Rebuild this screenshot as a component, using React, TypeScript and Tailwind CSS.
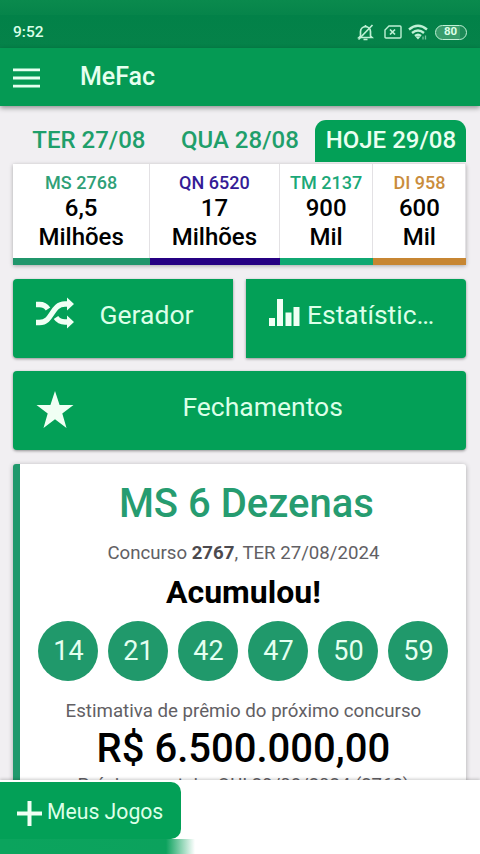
const days = [
  { label: "TER 27/08", className: "w-[151px] text-[#1f9f6b]" },
  { label: "QUA 28/08", className: "w-[151px] text-[#1f9f6b]" },
  { label: "HOJE 29/08", className: "w-[151px] rounded-t-[11px] bg-[#03a057] text-[#e9fff1]" },
]

const draws = [
  { name: "MS 2768", value: "6,5", unit: "Milhões", className: "w-[136.500px]", bar: "bg-[#20966b]", color: "text-[#2fa077]" },
  { name: "QN 6520", value: "17", unit: "Milhões", className: "w-[130px]", bar: "bg-[#250082]", color: "text-[#341c96]" },
  { name: "TM 2137", value: "900", unit: "Mil", className: "w-[93.500px]", bar: "bg-[#10a872]", color: "text-[#1ba878]" },
  { name: "DI 958", value: "600", unit: "Mil", className: "w-[93px]", bar: "bg-[#c78632]", color: "text-[#c98c3c]" },
]

const numbers = [14, 21, 42, 47, 50, 59]

function ShuffleIcon() {
  return (
    <svg viewBox="0 0 38 32" className="mt-px ml-[0.600px] h-8 w-[38px]" fill="none" stroke="#f0fff4" strokeWidth="5.400">
      <path d="M0 7.500h3.500c4 0 6.500 1.500 8.500 4.500" />
      <path d="M0 25.500h3.500C17 25.500 15 7 29 7h3.500" />
      <path d="M20 20.500c2 3 5 4.500 9 4.500h3.500" />
      <path d="M31 .5v13l7-6.500zM31 18.500v13l7-6.500z" fill="#f0fff4" stroke="none" />
    </svg>
  )
}

function BellOffIcon() {
  return (
    <svg viewBox="0 0 17 17" className="mr-[10px] h-[17px] w-[17px]" fill="none" stroke="currentColor" strokeWidth="1.700">
      <path d="M2 13.500 3.500 12V7.500a5 5 0 0 1 5-4.800 5 5 0 0 1 5 4.800V12l1.500 1.500zM8.500 1v2M6.500 15.500h4" />
      <path d="M15.500 1 1.500 15.500" />
    </svg>
  )
}

function WifiIcon() {
  return (
    <svg viewBox="0 0 20 16" className="mr-[7px] h-4 w-5" fill="none" stroke="currentColor" strokeWidth="2.300">
      <path d="M1 5.500q9-7.500 18 0M4 9q6-5 12 0" />
      <path d="M7 12q3-2.500 6 0" />
      <path d="m7.800 13 2.200 2.500 2.200-2.500q-2.200-1.500-4.400 0z" fill="currentColor" stroke="none" />
      <path d="M15 12.500v3M17.500 11.500v4" strokeWidth="1.300" opacity=".6" />
    </svg>
  )
}

function StatusBar() {
  return (
    <div className="flex h-12 shrink-0 items-start justify-between bg-[linear-gradient(180deg,#0a8a4d_0,#06844a_15px,#028148_15px,#058249_100%)] px-[13px] pt-[21px] text-[#d9ffe8]">
      <span className="text-[15.500px] font-medium leading-[23px]">9:52</span>
      <div className="flex h-[22px] items-center text-[#bff0d5]">
        <BellOffIcon />
        <svg viewBox="0 0 18 14" className="mr-[6px] h-[14px] w-[18px]" fill="none" stroke="currentColor" strokeWidth="1.400">
          <path d="M5 1h11q1 0 1 1v10q0 1-1 1H2q-1 0-1-1V5z" />
          <path d="m6 4.500 5 5m0-5-5 5" strokeWidth="1.700" />
        </svg>
        <WifiIcon />
        <span className="flex h-[15px] w-8 items-center justify-center rounded-full border-[1.500px] border-[#bff0d5] bg-[linear-gradient(90deg,#3a9d6c_80%,#1c8a57_80%)] pr-px text-[11.500px] font-bold leading-none text-[#dcffe8]">80</span>
      </div>
    </div>
  )
}

export default function App() {
  return (
    <div className="flex h-[854px] w-[480px] flex-col overflow-hidden bg-[#f1eff2] font-[Roboto,sans-serif]">
      <StatusBar />
      <header className="z-10 flex h-[58px] shrink-0 items-center bg-[#059a54] pl-[13px] text-[#e6ffef] shadow-[0_2px_5px_rgba(0,0,0,0.4)]">
        <svg viewBox="0 0 27 20" className="mt-px h-5 w-[27px]" stroke="currentColor" strokeWidth="2.800">
          <path d="M0 1.800h27M0 10h27M0 18.200h27" />
        </svg>
        <h1 className="ml-10 text-[25px] font-medium leading-8">MeFac</h1>
      </header>

      <main className="min-h-0 flex-1 overflow-hidden pl-[13.400px] pr-[13.600px] pt-[14px]">
        <div className="flex h-[42px] text-center text-[24px] font-medium leading-[41px]">
          {days.map((day) => (
            <div key={day.label} className={day.className}>{day.label}</div>
          ))}
        </div>

        <section className="mt-[2px] flex h-[101px] bg-white shadow-[0_1px_4px_rgba(0,0,0,0.3)]">
          {draws.map((draw) => (
            <div key={draw.name} className={`flex flex-col text-center font-medium ${draw.className}`}>
              <div className="flex-1 border-r border-[#e3e1e4] pt-[8px]">
                <p className={`text-[18px] leading-[22px] ${draw.color}`}>{draw.name}</p>
                <p className="text-[24px] leading-[28.500px] text-black">{draw.value}</p>
                <p className="text-[24px] leading-[28.500px] text-black">{draw.unit}</p>
              </div>
              <div className={`h-[7px] ${draw.bar}`} />
            </div>
          ))}
        </section>

        <div className="mt-[14px] flex gap-[13px] text-[26.500px] text-[#dcffe8]">
          <button className="flex h-[79px] w-[220px] rounded-l-[4px] bg-[#03a057] pl-[22px] pt-[17px] shadow-[0_1px_3px_rgba(0,0,0,0.4)]">
            <ShuffleIcon />
            <span className="ml-[25.500px] leading-[38px]">Gerador</span>
          </button>
          <button className="flex h-[79px] w-[220px] rounded-r-[4px] bg-[#03a057] pl-[22.500px] pt-[17px] shadow-[0_1px_3px_rgba(0,0,0,0.4)]">
            <svg viewBox="0 0 31 28" className="mt-[3px] h-7 w-[31px]" fill="#f0fff4">
              <path d="M0 19h6v8H0zM8 0h6v27H8zM16.500 13.500h6V27h-6zM24.500 8h6v19h-6z" />
            </svg>
            <span className="ml-[7px] leading-[38px]">Estatístic…</span>
          </button>
        </div>

        <button className="mt-[13px] flex h-[79px] w-full rounded-[4px] bg-[#03a057] pl-[22.500px] pt-[17px] text-[26.500px] text-[#dcffe8] shadow-[0_1px_3px_rgba(0,0,0,0.4)]">
          <svg viewBox="0 0 38 38" className="mt-[3px] h-[38px] w-[38px]" fill="#f0fff4">
            <path d="m19 0 4.600 14H37.500L26.300 22.500 30.500 37 19 28.200 7.500 37l4.200-14.500L.5 14h13.900z" />
          </svg>
          <span className="flex-1 pr-[15px] text-center leading-[38px]">Fechamentos</span>
        </button>

        <section className="mt-[14px] h-[420px] rounded-[3px] border-l-[7px] border-[#20996c] bg-white pt-[15px] text-center shadow-[0_1px_5px_rgba(0,0,0,0.3)]">
          <h2 className="pl-[6px] text-[40px] font-medium leading-[50px] text-[#269c70]">MS 6 Dezenas</h2>
          <p className="mt-[12px] text-[18.650px] leading-6 text-[#626064]">
            Concurso <b className="text-[#4c4a4e]">2767</b>, TER 27/08/2024
          </p>
          <p className="mt-2 text-[32px] font-bold leading-[38px] text-black">Acumulou!</p>
          <div className="mt-[10px] flex justify-center gap-[10px]">
            {numbers.map((number) => (
              <span key={number} className="flex h-[60px] w-[60px] items-center justify-center rounded-full bg-[#20996b] text-[27px] text-[#e4fff0]">{number}</span>
            ))}
          </div>
          <p className="mt-[18px] text-[18.700px] leading-6 text-[#626064]">Estimativa de prêmio do próximo concurso</p>
          <p className="mt-[3px] text-[40px] font-medium leading-[46px] text-black">R$ 6.500.000,00</p>
          <p className="mt-px text-[18.500px] leading-6 text-[#626064]">Próximo sorteio: QUI 29/08/2024 (2768)</p>
        </section>
      </main>

      <footer className="z-10 h-[74px] shrink-0 bg-white pt-[2px] shadow-[0_-1px_3px_rgba(0,0,0,0.2)]">
        <button className="flex h-[57px] w-[181px] items-center rounded-r-[10px] bg-[#03a057] pl-[17px] text-[21.200px] text-[#dcffe8]">
          <svg viewBox="0 0 25 25" className="mt-[5px] h-[25px] w-[25px]" stroke="#f0fff4" strokeWidth="4">
            <path d="M12.500 0v25M0 12.500h25" />
          </svg>
          <span className="ml-[5px] pt-[2px]">Meus Jogos</span>
        </button>
        <div className="h-[15px] w-[195px] bg-[linear-gradient(90deg,#0ba45d_0,#0ca25d_166px,#ffffff_195px)]" />
      </footer>
    </div>
  )
}
